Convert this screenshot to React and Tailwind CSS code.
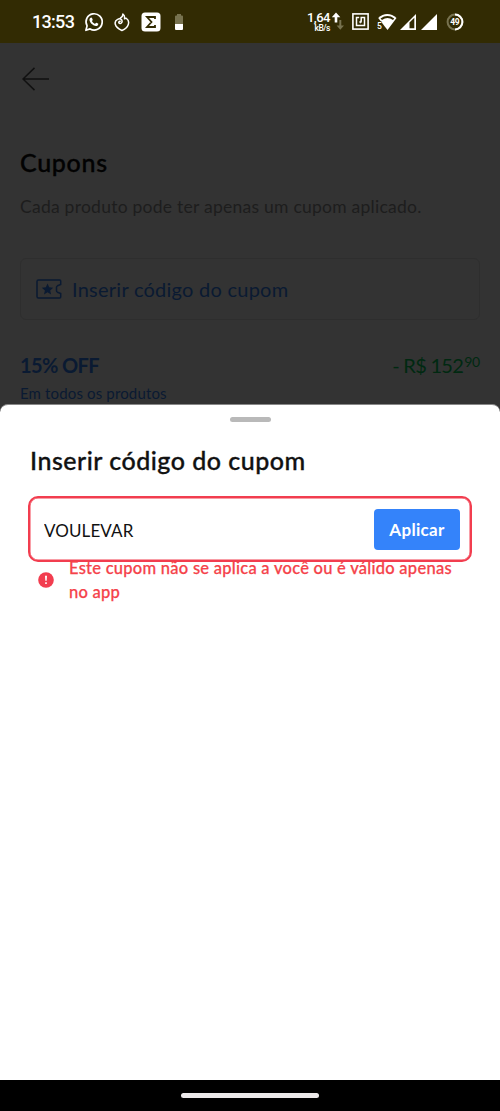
import { useState } from "react";

function StatusBar() {
  return (
    <header className="flex h-[43px] items-center bg-[#322b03] text-white">
      <span className="ml-8 w-[52px] whitespace-nowrap font-['Roboto',sans-serif] text-[18px] font-medium leading-none tracking-[-0.7px]">13:53</span>
      <svg className="h-5 w-5 shrink-0" viewBox="0 0 20 20" fill="none">
        <path d="M1.900 18.300l1.200-4.400a8.100 8.100 0 1 1 3 3z" stroke="white" strokeWidth="1.700" strokeLinejoin="round" />
        <path d="M6.300 6.100c.5-.7 1.400-.7 1.700 0l.7 1.600c.2.5-.6 1-.8 1.400.8 1.400 1.700 2.200 3.100 2.800.5-.3.9-1.300 1.400-1.100l1.600.8c.6.3.3 1.300-.3 1.800-1.200 1-2.700.7-4.300-.2-1.700-1-3-2.400-3.700-4.200-.5-1.300-.2-2.200.6-2.900z" fill="white" />
      </svg>
      <svg className="ml-2.5 h-5 w-4 shrink-0" viewBox="0 0 16 20" fill="none" stroke="white" strokeWidth="1.500" strokeLinejoin="round" strokeLinecap="round">
        <path d="M6.200 9.200c-1.300-.3-2 1.600-.7 2.100 1.300.6 2.800-.6 2.600-2.300C7.900 7 5.600 6.200 3.600 7.300 1.600 8.300.8 10.300 1.300 12.300c.7 2.700 3.600 4.900 6.600 6.200 3.100-1.300 5.500-3.400 6.400-6.100.7-2.200.2-4.500-1.800-5.900-.7-.4-1.300-.1-2 .3.300-2-.1-3.700-1.600-4.800 0 1.800-.9 3.100-2.400 4" />
      </svg>
      <svg className="ml-[11px] h-5 w-5 shrink-0" viewBox="0 0 20 20">
        <rect x=".5" y=".5" width="19" height="19" rx="3.500" fill="white" />
        <path d="M14 7V5H6l4.500 5L6 15h8v-2" fill="none" stroke="#322b03" strokeWidth="1.800" />
      </svg>
      <svg className="ml-[14px] h-4 w-2 shrink-0" viewBox="0 0 8 16">
        <path d="M2 1.500V0h4v1.500h1q1 0 1 1V10H0V2.500q0-1 1-1z" fill="#77724f" />
        <path d="M0 10h8v5q0 1-1 1H1q-1 0-1-1z" fill="white" />
      </svg>

      <div className="ml-auto flex items-center">
        <div className="flex w-[24px] flex-col items-end whitespace-nowrap font-['Roboto',sans-serif] font-medium">
          <span className="text-[13px] leading-[13px] tracking-[-0.5px]">1,64</span>
          <span className="text-[8.500px] leading-[8px] tracking-[-0.5px]">kB/s</span>
        </div>
        <svg className="ml-0.5 h-[19px] w-3 shrink-0" viewBox="0 0 12 19">
          <path d="M4 .5l4.300 4.800H5.300v5.200H2.700V5.300H-.3z" fill="white" />
          <path d="M7.300 8h2v5.500H12l-3.700 4.300-3.700-4.300h2.700z" fill="#77724f" />
        </svg>
        <svg className="ml-2 mr-px h-[17px] w-[17px] shrink-0" viewBox="0 0 17 17" fill="none" stroke="white">
          <rect x=".9" y=".9" width="15.200" height="15.200" strokeWidth="1.600" />
          <path d="M7.200 4.500H4.500v8h8v-8H9.200v4.300" strokeWidth="1.500" />
          <circle cx="8.500" cy="9" r=".8" fill="white" strokeWidth="1" />
        </svg>
        <svg className="ml-[7px] h-5 w-5 shrink-0" viewBox="0 0 20 20">
          <path d="M1.200 6C6.500 .7 14 .7 19.500 6L10.500 18z" fill="white" />
          <path d="M3.500 6.500C8 3.200 13 3.200 17.200 6.500L16 8C12.300 5.300 8.700 5.300 5 8z" fill="#322b03" />
          <text x="0" y="17.300" fontFamily="Roboto, sans-serif" fontSize="8.500" fontWeight="500" fill="white" stroke="#322b03" strokeWidth="1" paintOrder="stroke">5</text>
        </svg>
        <svg className="ml-[3px] h-4 w-4 shrink-0" viewBox="0 0 16 16">
          <path d="M0 16L16 0v16z" fill="white" />
          <path d="M9.500 8.400L14.300 3.700v10.600H9.500z" fill="#322b03" />
        </svg>
        <svg className="ml-[5px] h-4 w-4 shrink-0" viewBox="0 0 16 16">
          <path d="M0 16L16 0v16z" fill="white" />
        </svg>
        <svg className="ml-[9px] mr-9 h-[18px] w-[18px] shrink-0" viewBox="0 0 18 18">
          <circle cx="9" cy="9" r="7.400" fill="none" stroke="#77724f" strokeWidth="2" />
          <path d="M9 1.600a7.400 7.400 0 0 1 0 14.800" fill="none" stroke="white" strokeWidth="2" />
          <text x="8.800" y="12.100" textAnchor="middle" fontFamily="Roboto, sans-serif" fontSize="8.500" fontWeight="700" letterSpacing="-0.400" fill="white">49</text>
        </svg>
      </div>
    </header>
  );
}

function CouponList() {
  return (
    <section className="h-[361px] overflow-hidden bg-[#333333] px-5">
      <svg className="ml-0.5 mt-6 block h-6 w-7" viewBox="0 0 28 24" fill="none" stroke="#111111" strokeWidth="1.500">
        <path d="M1 12h26M12.500 .9L1 12l11.500 11.100" />
      </svg>
      <h1 className="mt-[55px] whitespace-nowrap text-[25px] font-medium leading-8 tracking-[0.7px] text-[#020202] [-webkit-text-stroke:0.35px_currentColor]">Cupons</h1>
      <p className="mt-[17px] whitespace-nowrap text-[17.500px] leading-6 tracking-[0.25px] text-[#1d1d1d]">
        Cada produto pode ter apenas um cupom aplicado.
      </p>
      <div className="mt-[39px] flex h-[62px] items-center rounded-md border border-[#2e2e2e] pl-[15px] text-[#0a1a32]">
        <svg className="h-5 w-[26px] shrink-0" viewBox="0 0 26 20" fill="none" stroke="currentColor" strokeWidth="1.500">
          <path d="M2.500 1h21.200q1 0 1 1v3.500l-3.200 1.300q-1 .5-1 1.500v3.400q0 1 1 1.500l3.200 1.300V18q0 1-1 1H2.500q-1.500 0-1.500-1.500v-15Q1 1 2.500 1z" />
          <path d="M11.500 4.500l1.700 3.800 4 .4-3 2.700.9 4-3.600-2.100-3.500 2.100.9-4-3.100-2.700 4.100-.4z" fill="currentColor" stroke="none" />
        </svg>
        <span className="ml-2.5 whitespace-nowrap text-[20px] tracking-[0.25px]">Inserir código do cupom</span>
      </div>
      <div className="mt-[31px] flex items-center justify-between text-[20px] leading-7">
        <span className="font-bold tracking-[-0.6px] text-[#0a1a32]">15% OFF</span>
        <span className="flex whitespace-nowrap tracking-[-0.7px] text-[#002911]">
          - R$ 152<span className="-mt-[3px] ml-px text-[14px] tracking-[-0.2px]">90</span>
        </span>
      </div>
      <p className="whitespace-nowrap text-[15px] leading-7 tracking-[0.15px] text-[#0a1a32]">Em todos os produtos</p>
    </section>
  );
}

function CouponSheet() {
  const [code, setCode] = useState("VOULEVAR");

  return (
    <section className="flex h-[676px] flex-col bg-[#333333]">
      <div className="flex flex-1 flex-col rounded-t-lg border-t border-[#888888] bg-white">
        <div className="mx-auto mt-3 h-[5px] w-[41px] shrink-0 rounded-full bg-[#b9b9b9]" />
        <h2 className="ml-[30px] mt-[22px] whitespace-nowrap text-[25px] font-medium leading-8 tracking-[0.5px] text-[#111111] [-webkit-text-stroke:0.35px_currentColor]">
          Inserir código do cupom
        </h2>
        <div className="mx-7 mt-[20px] flex h-[66px] shrink-0 items-center justify-between rounded-[10px] border-2 border-[#f23d4f] pl-[14px] pr-2.5 shadow-[inset_0_0_0_0.5px_#f23d4f]">
          <input
            value={code}
            onChange={(event) => setCode(event.target.value)}
            aria-label="Código do cupom"
            className="w-60 pt-[3px] text-[17px] tracking-[0.1px] text-[#111111] outline-none"
          />
          <button type="button" className="h-[41px] w-[86px] rounded-[4px] bg-[#3483fa] pt-px text-[17px] font-bold tracking-[0.3px] text-white">
            Aplicar
          </button>
        </div>
        <div className="-mt-[6px] flex pl-[38px]">
          <svg className="mt-[16px] h-4 w-4 shrink-0" viewBox="0 0 16 16">
            <circle cx="8" cy="8" r="7.800" fill="#f23d4f" />
            <path d="M7 3.800h2l-.3 5H7.300zM7.200 10.300h1.600v1.600H7.200z" fill="white" />
          </svg>
          <p className="ml-[15px] whitespace-nowrap text-[16.500px] font-medium leading-6 tracking-[0.26px] text-[#f5424a] [-webkit-text-stroke:0.25px_currentColor]">
            Este cupom não se aplica a você ou é válido apenas
            <br />
            no app
          </p>
        </div>
      </div>
    </section>
  );
}

export default function App() {
  return (
    <main className="h-[1111px] w-[500px] overflow-hidden bg-[#333333] font-['Lato',sans-serif]">
      <StatusBar />
      <CouponList />
      <CouponSheet />
      <footer className="flex h-[31px] items-center justify-center bg-black">
        <div className="h-[5px] w-[138px] rounded-full bg-[#ebe8e9]" />
      </footer>
    </main>
  );
}
